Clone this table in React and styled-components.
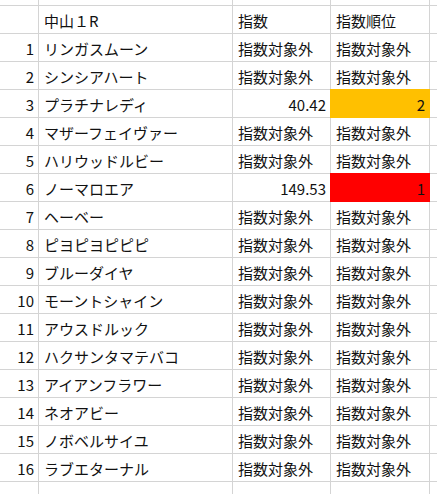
import React from 'react'
import styled, { createGlobalStyle } from 'styled-components'

const GlobalStyle = createGlobalStyle`
  html, body {
    margin: 0;
    padding: 0;
    background: #ffffff;
    overflow: hidden;
  }
  body {
    font-family: "Noto Sans CJK JP", "Noto Sans", sans-serif;
    color: #111111;
  }
`

const rows = [
    { name: 'リンガスムーン', score: null, rank: null },
    { name: 'シンシアハート', score: null, rank: null },
    { name: 'プラチナレディ', score: '40.42', rank: 2 },
    { name: 'マザーフェイヴァー', score: null, rank: null },
    { name: 'ハリウッドルビー', score: null, rank: null },
    { name: 'ノーマロエア', score: '149.53', rank: 1 },
    { name: 'ヘーベー', score: null, rank: null },
    { name: 'ピヨピヨピピピ', score: null, rank: null },
    { name: 'ブルーダイヤ', score: null, rank: null },
    { name: 'モーントシャイン', score: null, rank: null },
    { name: 'アウスドルック', score: null, rank: null },
    { name: 'ハクサンタマテバコ', score: null, rank: null },
    { name: 'アイアンフラワー', score: null, rank: null },
    { name: 'ネオアビー', score: null, rank: null },
    { name: 'ノボベルサイユ', score: null, rank: null },
    { name: 'ラブエターナル', score: null, rank: null },
]

const rankColors = { 1: '#ff0000', 2: '#ffc000' }

const EmptyRow = () => (
    <>
        <Cell />
        <Cell />
        <Cell />
        <Cell />
        <Cell />
        <Cell />
    </>
)

function Spreadsheet() {
    return (
        <Sheet>
            {/* partial row above the header */}
            <EmptyRow />

            <Cell />
            <Cell />
            <Cell>中山１R</Cell>
            <Cell>指数</Cell>
            <Cell>指数順位</Cell>
            <Cell />

            {rows.map((r, i) => (
                <React.Fragment key={i}>
                    <Cell />
                    <Cell $align="right">{i + 1}</Cell>
                    <Cell>{r.name}</Cell>
                    {r.score
                        ? <Cell $align="right">{r.score}</Cell>
                        : <Cell>指数対象外</Cell>}
                    {r.rank
                        ? <Cell $align="right" $fill={rankColors[r.rank]}>{r.rank}</Cell>
                        : <Cell>指数対象外</Cell>}
                    <Cell />
                </React.Fragment>
            ))}

            {/* partial row below */}
            <EmptyRow />
        </Sheet>
    )
}

export default function App() {
    return (
        <>
            <GlobalStyle />
            <Spreadsheet />
        </>
    )
}

const Sheet = styled.div`
    display: grid;
    grid-template-columns: 6px 31px 193px 97px 98px 1fr;
    grid-template-rows: 5px repeat(17, 27px) 40px;
    gap: 1px;
    background: #d4d4d4;
    width: 437px;
    height: 494px;
    overflow: hidden;
`

const Cell = styled.div`
    display: flex;
    align-items: center;
    justify-content: ${p => (p.$align === 'right' ? 'flex-end' : 'flex-start')};
    padding: 1px 4px 0 5px;
    background: ${p => p.$fill || '#ffffff'};
    box-shadow: ${p => (p.$fill ? `0 0 0 1px ${p.$fill}` : 'none')};
    font-size: 15px;
    line-height: 1;
    white-space: nowrap;
    overflow: hidden;
    min-width: 0;
`
